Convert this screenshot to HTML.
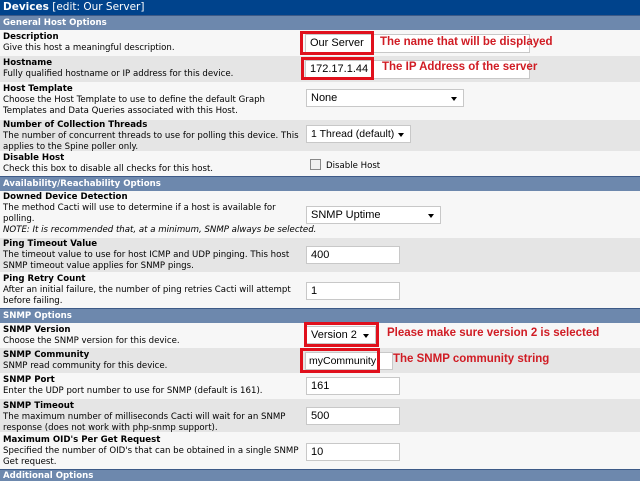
<!DOCTYPE html>
<html><head><meta charset="utf-8"><style>
*{margin:0;padding:0;box-sizing:border-box}
body{width:640px;height:481px;overflow:hidden;background:#fff;font-family:"DejaVu Sans","Liberation Sans",sans-serif;font-size:8.6px;color:#000;position:relative}
.a{position:absolute}
.title{left:0;top:0;width:640px;height:15px;background:#00438c;color:#fff;font-size:10.5px;padding:0 3px;line-height:14px}
.title b{font-weight:bold}
.hd{left:0;width:640px;height:15px;background:#6d88ad;color:#fff;font-weight:bold;font-size:8.6px;line-height:15px;padding-left:3px;border-top:1px solid #3d5a87}
.row{left:0;width:640px;padding:1px 3px;line-height:11px;overflow:hidden}
.w{background:#f7f7f7}.g{background:#e5e5e5}
.row b{display:block}
.in{position:absolute;background:#fff;border:1px solid #c8c8c8;font-family:"Liberation Sans",sans-serif;font-size:11px;line-height:16px;padding-left:4px;white-space:nowrap;overflow:hidden}
.sel::after{content:"";position:absolute;right:6px;top:7px;border-left:3.5px solid transparent;border-right:3.5px solid transparent;border-top:4px solid #000}
.red{position:absolute;border:3px solid #e0101c}
.ann{position:absolute;color:#d01c24;font-weight:bold;font-family:"Liberation Sans",sans-serif;font-size:11.5px;white-space:nowrap}
</style></head><body>
<div class="a title"><b>Devices</b> [edit: Our Server]</div>
<div class="a hd" style="top:15px">General Host Options</div>
<div class="a row w" style="top:30px;height:26px;padding-top:2px"><b>Description</b>Give this host a meaningful description.</div>
<div class="a row g" style="top:56px;height:26px;padding-top:2px"><b>Hostname</b>Fully qualified hostname or IP address for this device.</div>
<div class="a row w" style="top:82px;height:38px;padding-top:2px"><b>Host Template</b>Choose the Host Template to use to define the default Graph<br>Templates and Data Queries associated with this Host.</div>
<div class="a row g" style="top:120px;height:31px;padding-top:0"><b>Number of Collection Threads</b>The number of concurrent threads to use for polling this device. This<br>applies to the Spine poller only.</div>
<div class="a row w" style="top:151px;height:25px;padding-top:2px"><b>Disable Host</b>Check this box to disable all checks for this host.</div>
<div class="a hd" style="top:176px">Availability/Reachability Options</div>
<div class="a row w" style="top:191px;height:47px"><b>Downed Device Detection</b>The method Cacti will use to determine if a host is available for<br>polling.<br><i>NOTE: It is recommended that, at a minimum, SNMP always be selected.</i></div>
<div class="a row g" style="top:238px;height:34px"><b>Ping Timeout Value</b>The timeout value to use for host ICMP and UDP pinging. This host<br>SNMP timeout value applies for SNMP pings.</div>
<div class="a row w" style="top:272px;height:36px;padding-top:2px"><b>Ping Retry Count</b>After an initial failure, the number of ping retries Cacti will attempt<br>before failing.</div>
<div class="a hd" style="top:308px">SNMP Options</div>
<div class="a row w" style="top:323px;height:25px;padding-top:2px"><b>SNMP Version</b>Choose the SNMP version for this device.</div>
<div class="a row g" style="top:348px;height:25px;padding-top:2px"><b>SNMP Community</b>SNMP read community for this device.</div>
<div class="a row w" style="top:373px;height:26px;padding-top:2px"><b>SNMP Port</b>Enter the UDP port number to use for SNMP (default is 161).</div>
<div class="a row g" style="top:399px;height:33px;padding-top:2px"><b>SNMP Timeout</b>The maximum number of milliseconds Cacti will wait for an SNMP<br>response (does not work with php-snmp support).</div>
<div class="a row w" style="top:432px;height:37px;padding-top:3px"><b>Maximum OID's Per Get Request</b>Specified the number of OID's that can be obtained in a single SNMP<br>Get request.</div>
<div class="a hd" style="top:469px;height:12px;line-height:12px">Additional Options</div>

<div class="in" style="left:305px;top:34px;width:225px;height:19px;line-height:17px">Our Server</div>
<div class="in" style="left:305px;top:60px;width:225px;height:19px;line-height:17px">172.17.1.44</div>
<div class="red" style="left:300px;top:31px;width:74px;height:24px"></div>
<div class="red" style="left:301px;top:57px;width:73px;height:23px"></div>
<div class="ann" style="left:380px;top:36px">The name that will be displayed</div>
<div class="ann" style="left:382px;top:61px">The IP Address of the server</div>

<div class="in sel" style="left:306px;top:89px;width:158px;height:18px">None</div>
<div class="in sel" style="left:306px;top:125px;width:105px;height:18px;font-size:10.5px">1 Thread (default)</div>
<div class="a" style="left:310px;top:159px;width:11px;height:11px;border:1px solid #888;background:#f0f0f0"></div>
<div class="a" style="left:326px;top:161px;font-size:8.6px">Disable Host</div>
<div class="in sel" style="left:306px;top:206px;width:135px;height:18px">SNMP Uptime</div>
<div class="in" style="left:306px;top:246px;width:94px;height:18px">400</div>
<div class="in" style="left:306px;top:282px;width:94px;height:18px">1</div>

<div class="in sel" style="left:306px;top:326px;width:70px;height:18px">Version 2</div>
<div class="red" style="left:304px;top:322px;width:75px;height:25px"></div>
<div class="ann" style="left:387px;top:327px">Please make sure version 2 is selected</div>
<div class="in" style="left:305px;top:352px;width:88px;height:18px;padding-left:3px;font-size:10.5px">myCommunity</div>
<div class="red" style="left:300px;top:348px;width:80px;height:25px"></div>
<div class="ann" style="left:393px;top:353px">The SNMP community string</div>
<div class="in" style="left:306px;top:377px;width:94px;height:18px">161</div>
<div class="in" style="left:306px;top:407px;width:94px;height:18px">500</div>
<div class="in" style="left:306px;top:443px;width:94px;height:18px">10</div>
</body></html>
